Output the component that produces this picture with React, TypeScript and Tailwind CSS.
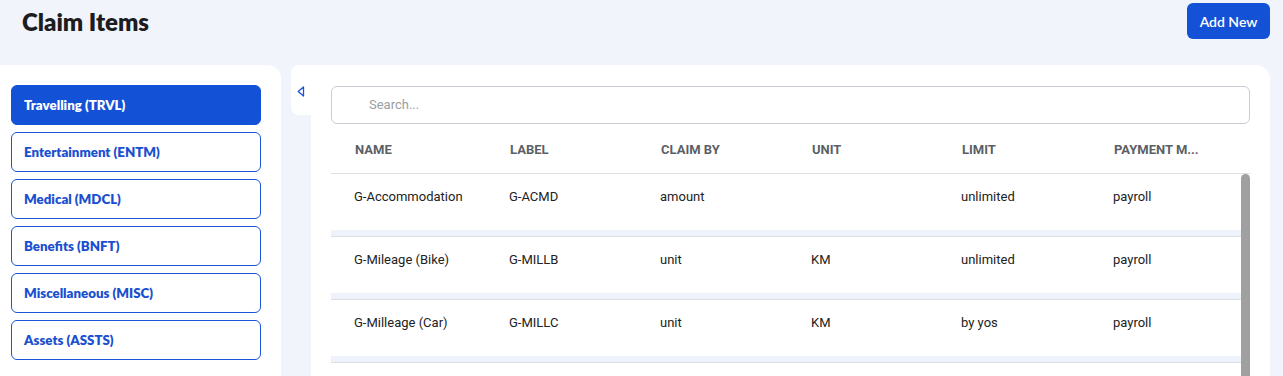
import React from "react";

const categories = [
  "Travelling (TRVL)",
  "Entertainment (ENTM)",
  "Medical (MDCL)",
  "Benefits (BNFT)",
  "Miscellaneous (MISC)",
  "Assets (ASSTS)",
];

const headers = ["NAME", "LABEL", "CLAIM BY", "UNIT", "LIMIT", "PAYMENT M..."];

const rows = [
  ["G-Accommodation", "G-ACMD", "amount", "", "unlimited", "payroll"],
  ["G-Mileage (Bike)", "G-MILLB", "unit", "KM", "unlimited", "payroll"],
  ["G-Milleage (Car)", "G-MILLC", "unit", "KM", "by yos", "payroll"],
];

export default function App() {
  return (
    <div
      className="h-screen overflow-hidden bg-[#f1f4fb] flex flex-col"
      style={{ fontFamily: "Lato, 'Noto Sans', sans-serif" }}
    >
      <div className="flex items-start justify-between h-[65px] pl-[22px] pr-[13px]">
        <h1 className="mt-[7px] text-[24px] font-extrabold text-[#1d1d1f] leading-[30px]">Claim Items</h1>
        <button className="mt-[3px] w-[83px] h-[36px] rounded-[6px] bg-[#1352d6] text-white text-[14px] font-semibold">
          Add New
        </button>
      </div>
      <div className="flex flex-1 min-h-0">
        <div className="w-[281px] bg-white rounded-tr-[14px] pt-[20px] pl-[11px] pr-[20px] flex flex-col gap-[7px]">
          {categories.map((c, i) => (
            <div
              key={c}
              className={
                i === 0
                  ? "h-[40px] rounded-[6px] bg-[#1352d6] border border-[#1352d6] text-white text-[13.3px] font-extrabold flex items-center pl-[12px] pt-[2px]"
                  : "h-[40px] rounded-[6px] bg-white border border-[#1a55d8] text-[#1a4fd0] text-[13.3px] font-extrabold flex items-center pl-[12px] pt-[1px]"
              }
            >
              {c}
            </div>
          ))}
        </div>
        <div className="ml-[10px] w-[20px] h-[50px] bg-white rounded-l-[8px] flex justify-center pt-[21px]">
          <svg width="8" height="11" viewBox="0 0 8 11">
            <polygon points="6.5,1 6.5,10 1.2,5.5" fill="none" stroke="#1a55d8" strokeWidth="1.3" strokeLinejoin="round" />
          </svg>
        </div>
        <div
          className="w-[959px] bg-white rounded-tr-[14px] pt-[21px] px-[20px] flex flex-col min-h-0"
          style={{ fontFamily: "Roboto, 'Liberation Sans', sans-serif" }}
        >
          <div className="h-[38px] rounded-[6px] border border-[#c9cdd3] flex items-center pl-[37px] text-[13px] text-[#9a9ea4]">
            Search...
          </div>
          <div className="h-[50px] pt-[2px] border-b border-[#dcdfe4] grid grid-cols-[155px_151px_151px_150px_152px_1fr] pr-[9px] items-center">
            {headers.map((h) => (
              <div key={h} className="pl-[24px] text-[13px] font-bold text-[#5b5f66]">
                {h}
              </div>
            ))}
          </div>
          <div className="flex flex-1 min-h-0">
            <div className="flex-1 flex flex-col">
              {rows.map((r, i) => (
                <div key={i} className="flex flex-col">
                  <div className="h-[56px] grid grid-cols-[155px_151px_151px_150px_152px_1fr] pt-[15px]">
                    {r.map((c, j) => (
                      <div key={j} className="pl-[23px] text-[13px] text-[#222] leading-[16px]">
                        {c}
                      </div>
                    ))}
                  </div>
                  <div className="h-[7px] bg-[#eef2fa] border-b border-[#dcdfe4]" />
                </div>
              ))}
            </div>
            <div className="w-[9px] bg-[#a0a0a0] rounded-t-[5px]" />
          </div>
        </div>
      </div>
    </div>
  );
}
